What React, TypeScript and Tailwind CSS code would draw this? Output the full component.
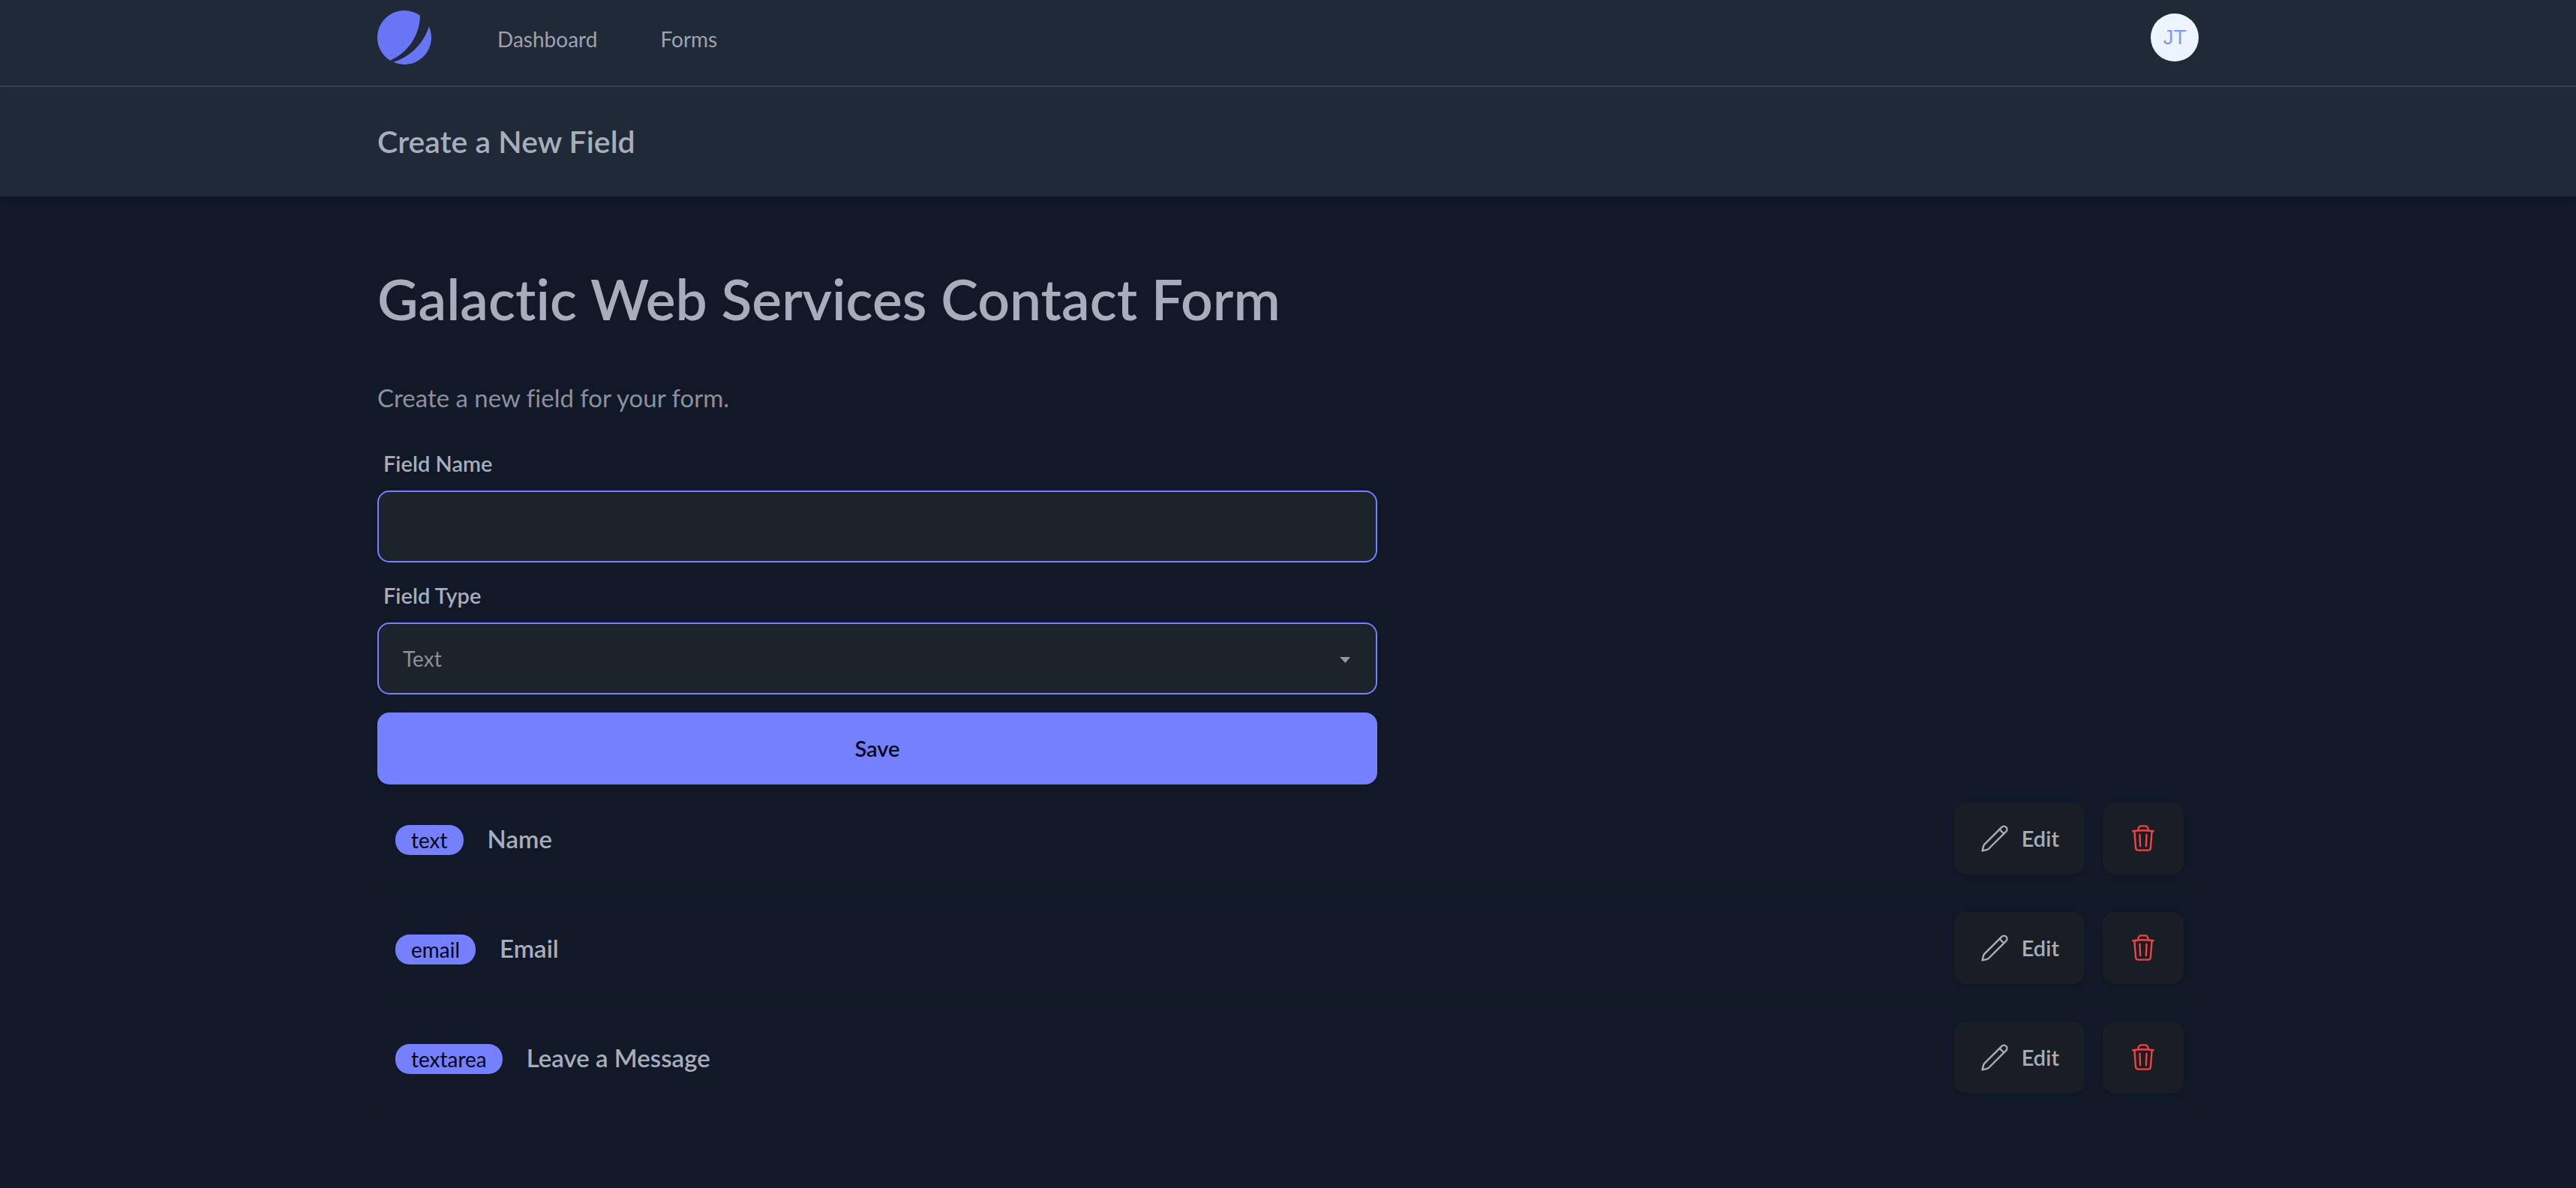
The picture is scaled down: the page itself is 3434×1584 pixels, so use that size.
import React, { useState } from 'react';

interface Field {
  id: number;
  type: string;
  name: string;
}

const fields: Field[] = [
  { id: 1, type: 'text', name: 'Name' },
  { id: 2, type: 'email', name: 'Email' },
  { id: 3, type: 'textarea', name: 'Leave a Message' },
];

const fieldTypes = ['Text', 'Email', 'Textarea'];

const Logo: React.FC = () => (
  <svg className="size-[72px]" viewBox="0 0 48 48" fill="none" aria-hidden="true">
    <path
      d="M11.395 44.428C4.557 40.198 0 32.632 0 24 0 10.745 10.745 0 24 0a23.891 23.891 0 0113.997 4.502c-.2 17.907-11.097 33.245-26.602 39.926z"
      fill="#6875f5"
    />
    <path
      d="M14.134 45.885A23.914 23.914 0 0024 48c13.255 0 24-10.745 24-24 0-3.516-.756-6.856-2.115-9.866-4.659 15.143-16.608 27.092-31.75 31.751z"
      fill="#6875f5"
    />
  </svg>
);

const PencilIcon: React.FC = () => (
  <svg
    className="size-10"
    viewBox="0 0 40 40"
    fill="none"
    stroke="currentColor"
    strokeWidth="2.4"
    strokeLinecap="round"
    strokeLinejoin="round"
    aria-hidden="true"
  >
    <path d="M3.6 36.4 5 30.6Q5.4 28.9 6.6 27.7L29.5 4.8a4.1 4.1 0 0 1 5.8 5.8L12.3 33.5Q11.1 34.7 9.4 35.1Z" />
    <path d="m26.6 7.8 5.7 5.7" />
  </svg>
);

const TrashIcon: React.FC = () => (
  <svg
    className="size-10"
    viewBox="0 0 40 40"
    fill="none"
    stroke="currentColor"
    strokeWidth="2.4"
    strokeLinecap="round"
    strokeLinejoin="round"
    aria-hidden="true"
  >
    <path d="M6.2 10.2Q20 8.2 33.8 10.2" />
    <path d="M13.6 8.8V7.2a3.8 3.8 0 0 1 3.8-3.8h5.2a3.8 3.8 0 0 1 3.8 3.8v1.6" />
    <path d="m8.4 10.6 1.7 22a3.3 3.3 0 0 0 3.3 3h13.2a3.3 3.3 0 0 0 3.3-3l1.7-22" />
    <path d="m15.5 15 .6 15.2M24.5 15l-.6 15.2" />
  </svg>
);

const FieldRow: React.FC<{ field: Field }> = ({ field }) => (
  <li className="flex items-center justify-between border-b-2 border-[#15191e] p-6">
    <div className="flex items-center gap-8">
      <span className="mt-1 flex h-10 items-center rounded-[19px] bg-[#7480ff] px-[21px] text-[28px] text-[#050617]">
        {field.type}
      </span>
      <span className="text-[33px] leading-10 font-semibold">{field.name}</span>
    </div>
    <div className="flex gap-6">
      <button
        type="button"
        className="flex h-24 items-center gap-4 rounded-2xl bg-[#191e24] px-[34px] text-[29px] font-semibold shadow-sm"
      >
        <PencilIcon />
        Edit
      </button>
      <button
        type="button"
        aria-label={`Delete ${field.name}`}
        className="flex h-24 items-center rounded-2xl bg-[#191e24] px-[34px] text-[#ef4444] shadow-sm"
      >
        <TrashIcon />
      </button>
    </div>
  </li>
);

const App: React.FC = () => {
  const [name, setName] = useState('');
  const [type, setType] = useState('Text');

  return (
    <div className="min-h-screen bg-[#111827] font-['Lato',sans-serif] text-[#a6adbb] [font-variant-ligatures:none]">
      <nav className="border-b-2 border-[#374151] bg-[#1f2937] pl-1">
        <div className="mx-auto flex h-[114px] max-w-[2560px] items-center justify-between px-16 pb-3.5">
          <div className="flex items-center">
            <a href="#" aria-label="Home">
              <Logo />
            </a>
            <div className="ml-22 flex gap-21 pt-1 text-[28px] leading-10 text-[#9ca3af]">
              <a href="#dashboard">Dashboard</a>
              <a href="#forms">Forms</a>
            </div>
          </div>
          <button
            type="button"
            className="mr-1 flex size-16 items-center justify-center rounded-full bg-[#ebf4ff] font-['Liberation_Sans',sans-serif] text-[28px] text-[#7f9cf5]"
          >
            JT
          </button>
        </div>
      </nav>

      <header className="bg-[#1f2937] pl-1 shadow-md">
        <div className="mx-auto max-w-[2560px] px-16 py-12">
          <h2 className="text-[41px] leading-[50px] font-semibold">Create a New Field</h2>
        </div>
      </header>

      <main className="pl-1">
        <div className="mx-auto max-w-[2560px] px-16 py-24">
          <h1 className="text-[75px] leading-20 font-semibold">Galactic Web Services Contact Form</h1>
          <p className="mt-17 text-[33px] leading-12 text-[#8a909d]">Create a new field for your form.</p>

          <form className="mt-7 flex w-[1333px] max-w-full flex-col" onSubmit={(e) => e.preventDefault()}>
            <label htmlFor="name" className="px-2 py-4 text-[29px] leading-10 font-semibold">
              Field Name
            </label>
            <input
              id="name"
              type="text"
              value={name}
              onChange={(e) => setName(e.target.value)}
              className="h-24 rounded-2xl border-2 border-[#7480ff] bg-[#1d232a] px-8 text-[28px] outline-none"
            />
            <label htmlFor="type" className="mt-2 px-2 py-4 text-[29px] leading-10 font-semibold">
              Field Type
            </label>
            <div className="relative">
              <select
                id="type"
                value={type}
                onChange={(e) => setType(e.target.value)}
                className="block h-24 w-full appearance-none rounded-2xl border-2 border-[#7480ff] bg-[#1d232a] px-8 text-[28px] text-[#8a909d] outline-none"
              >
                {fieldTypes.map((t) => (
                  <option key={t}>{t}</option>
                ))}
              </select>
              <svg
                className="pointer-events-none absolute top-[46px] right-9 h-2 w-3.5"
                viewBox="0 0 14 8"
                fill="#9299a6"
                aria-hidden="true"
              >
                <path d="M0 0h14L7.5 8z" />
              </svg>
            </div>
            <button
              type="submit"
              className="mt-6 h-24 rounded-2xl bg-[#7480ff] text-[29px] font-semibold text-[#050617] shadow-sm"
            >
              Save
            </button>
          </form>

          <ul>
            {fields.map((field) => (
              <FieldRow key={field.id} field={field} />
            ))}
          </ul>
        </div>
      </main>
    </div>
  );
};

export default App;
